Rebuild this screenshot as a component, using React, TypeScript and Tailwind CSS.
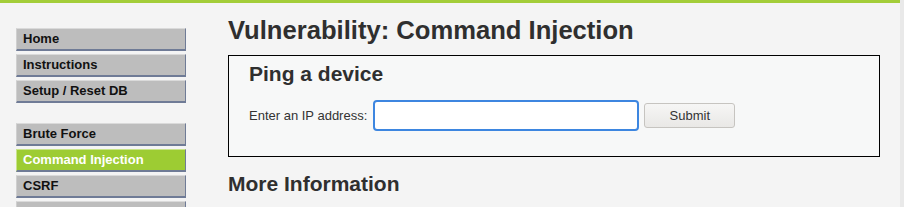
import { useState } from "react";

const groups = [
  ["Home", "Instructions", "Setup / Reset DB"],
  ["Brute Force", "Command Injection", "CSRF", "File Inclusion"],
];

function MenuItem({ label, active }: { label: string; active?: boolean }) {
  return (
    <li className="mb-[3px]">
      <a
        href="#"
        className={
          "block h-[23px] px-[6px] pt-[3px] text-[13px] leading-[14px] font-bold border-t border-l border-r border-b-2 " +
          (active
            ? "bg-[#9dcc33] text-white border-t-[#c9e48a] border-l-[#c9e48a] border-r-[#6f7b96] border-b-[#6f7b96]"
            : "bg-[#bdbdbd] text-[#111] border-t-[#dadada] border-l-[#cfcfcf] border-r-[#6f7b96] border-b-[#6f7b96]")
        }
      >
        {label}
      </a>
    </li>
  );
}

export default function App() {
  const [ip, setIp] = useState("");

  return (
    <div className="min-h-screen bg-[#e9e9e9] font-['Liberation_Sans',Arial,sans-serif]">
      <div className="w-[900px] min-h-[207px] bg-[#f4f4f4] border-t-[3px] border-[#a3cd39] flex">
        <nav className="w-[170px] ml-[16px] mt-[25px] shrink-0">
          {groups.map((g, i) => (
            <ul key={i} className="mb-[20px]">
              {g.map((item) => (
                <MenuItem key={item} label={item} active={item === "Command Injection"} />
              ))}
            </ul>
          ))}
        </nav>

        <main className="ml-[42px] flex-1 pr-[20px] text-[#2f2f2f]">
          <h1 className="mt-[12px] text-[25.6px] leading-[30px] font-bold">
            Vulnerability: Command Injection
          </h1>

          <div className="mt-[10px] border border-black bg-[#f7f8f8] px-[20px] pt-[6px] pb-[25px]">
            <h2 className="text-[21px] leading-[24px] font-bold">Ping a device</h2>
            <form
              className="mt-[14px] flex items-center"
              onSubmit={(e) => e.preventDefault()}
            >
              <label htmlFor="ip" className="text-[13px] text-[#333]">
                Enter an IP address:
              </label>
              <input
                id="ip"
                value={ip}
                onChange={(e) => setIp(e.target.value)}
                className="ml-[6px] w-[266px] h-[31px] bg-white border-2 border-[#3d86e0] rounded-[4px] px-1 text-[13px] outline-none"
              />
              <button
                type="submit"
                className="ml-[5px] w-[91px] h-[25px] rounded-[3px] border border-[#c6c4c0] bg-gradient-to-b from-[#f6f6f5] to-[#e9e8e6] text-[13px] text-[#333]"
              >
                Submit
              </button>
            </form>
          </div>

          <h2 className="mt-[15px] text-[21px] leading-[24px] font-bold">More Information</h2>
        </main>
      </div>
    </div>
  );
}
